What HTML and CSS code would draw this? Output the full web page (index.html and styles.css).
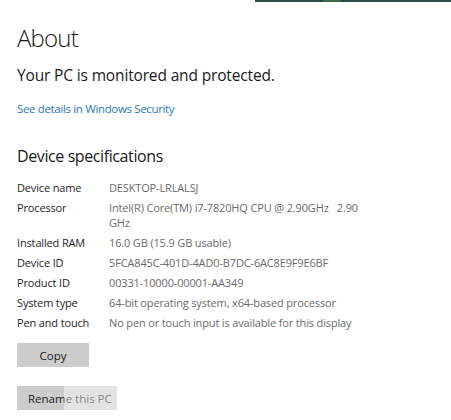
FILE: index.html
```html
<!DOCTYPE html>
<html>
<head>
<meta charset="utf-8">
<link rel="stylesheet" href="styles.css">
</head>
<body>
<div class="topbar"><span class="seg"></span></div>
<main class="page">
  <h1 class="title">About</h1>
  <p class="status">Your PC is monitored and protected.</p>
  <a class="link" href="#">See details in Windows Security</a>
  <h2 class="section">Device specifications</h2>
  <div class="specs">
    <div class="label">Device name</div><div class="value">DESKTOP-LRLALSJ</div>
    <div class="label">Processor</div><div class="value">Intel(R) Core(TM) i7-7820HQ CPU @ 2.90GHz &nbsp; 2.90<br>GHz</div>
    <div class="label">Installed RAM</div><div class="value">16.0 GB (15.9 GB usable)</div>
    <div class="label">Device ID</div><div class="value">5FCA845C-401D-4AD0-B7DC-6AC8E9F9E6BF</div>
    <div class="label">Product ID</div><div class="value">00331-10000-00001-AA349</div>
    <div class="label">System type</div><div class="value">64-bit operating system, x64-based processor</div>
    <div class="label">Pen and touch</div><div class="value">No pen or touch input is available for this display</div>
  </div>
  <button class="btn copy">Copy</button>
  <button class="btn rename">Rename this PC<span class="mark"></span></button>
</main>
</body>
</html>
```
FILE: styles.css
```css
html, body { margin: 0; padding: 0; background: #fff; }
body { font-family: "Open Sans", "Noto Sans", sans-serif; color: #1a1a1a; width: 451px; height: 420px; overflow: hidden; }
.topbar { height: 2px; margin-left: 255px; background: #2e4a48; display: flex; }
.seg { width: 18px; margin-left: 68px; background: #3c6b4c; }
.page { padding: 0 17px; display: flex; flex-direction: column; align-items: flex-start; }
.title { font-weight: 300; font-size: 24px; margin: 20px 0 0; line-height: 32px; letter-spacing: -0.8px; }
.status { font-weight: 400; font-size: 15.5px; margin: 10px 0 0; line-height: 22px; letter-spacing: -0.15px; }
.link { font-size: 11.5px; color: #2b79b3; text-decoration: none; margin-top: 15px; line-height: 16px; letter-spacing: -0.35px; }
.section { font-weight: 400; font-size: 16px; margin: 27px 0 0; line-height: 24px; letter-spacing: -0.4px; }
.specs { display: grid; grid-template-columns: 92px auto; row-gap: 5px; margin-top: 12px; font-size: 11px; line-height: 15px; letter-spacing: -0.15px; }
.label { color: #1e1e1e; }
.value { color: #6b6b6b; }
.btn { font-family: inherit; font-size: 11.5px; color: #1a1a1a; background: #cccccc; border: none; height: 24px; padding: 0; position: relative; }
.copy { width: 72px; margin-top: 13px; }
.rename { width: 100px; margin-top: 19px; text-align: left; padding-left: 11px; }
.mark { position: absolute; left: 47px; top: 0; width: 53px; height: 24px; background: rgba(255,255,255,0.45); }
```
